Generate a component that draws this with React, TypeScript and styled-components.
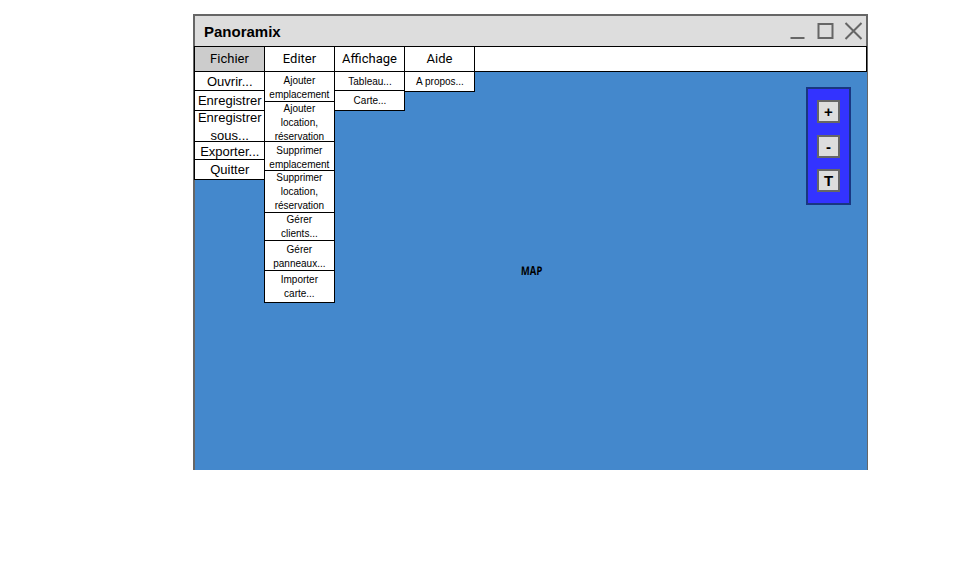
import React from "react";
import styled, { createGlobalStyle } from "styled-components";

const GlobalStyle = createGlobalStyle`
  * { box-sizing: border-box; }
  body { margin: 0; background: #fff; color: #000; font-family: "Liberation Sans", Arial, sans-serif; }
`;

const Window = styled.main`
  width: 675px;
  height: 456px;
  margin: 14px 0 0 193px;
  display: flex;
  flex-direction: column;
`;

const TitleBar = styled.header`
  height: 32px;
  flex: none;
  display: flex;
  align-items: center;
  justify-content: space-between;
  padding-left: 9px;
  background: #ddd;
  border: 2px solid #666;
  border-bottom: 0;
`;

const Title = styled.h1`
  margin: 0;
  padding-top: 2px;
  font-size: 15px;
  line-height: 20px;
`;

const WindowControls = styled.svg`
  display: block;
  width: 80px;
  height: 30px;
  fill: none;
  stroke: #666;
  stroke-width: 2;
`;

const MenuBar = styled.nav`
  height: 26px;
  flex: none;
  display: flex;
  background: #666;
  padding: 0 1px;
`;

const MenuStrip = styled.div`
  flex: 1;
  display: flex;
  background: #fff;
  border: 1px solid #000;
`;

const Menu = styled.div`
  position: relative;
  width: 70px;
  border-right: 1px solid #000;
`;

const MenuTitle = styled.div<{ $active?: boolean }>`
  height: 24px;
  font: 13px/24px Roboto, sans-serif;
  text-align: center;
  background: ${(p) => (p.$active ? "#ccc" : "#fff")};
`;

const Dropdown = styled.div<{ $large?: boolean }>`
  position: absolute;
  z-index: 1;
  top: 24px;
  left: -1px;
  width: 71px;
  border: 1px solid #000;
  border-bottom: 0;
  font-size: ${(p) => (p.$large ? 13 : 10)}px;
  line-height: ${(p) => (p.$large ? 18 : 14)}px;
  text-align: center;
`;

const MenuItem = styled.div<{ $height: number; $shift: number; $nudge: number }>`
  height: ${(p) => p.$height}px;
  display: flex;
  align-items: center;
  justify-content: center;
  overflow: hidden;
  white-space: pre;
  background: #fff;
  border-bottom: 1px solid #000;
  padding-top: ${(p) => p.$shift}px;
  padding-left: ${(p) => Math.max(p.$nudge, 0)}px;
  padding-right: ${(p) => Math.max(-p.$nudge, 0)}px;
`;

const MapArea = styled.section`
  flex: 1;
  display: grid;
  place-items: center;
  position: relative;
  background: #4488cc;
  border-left: 2px solid #666;
  border-right: 1px solid #666;
`;

const MapLabel = styled.span`
  display: flex;
  padding-left: 1px;
  font: 700 12px/14px "Open Sans", sans-serif;
  transform: scaleX(0.78);
`;

const MapLetter = styled.span<{ $tilt: number }>`
  transform: skewX(${(p) => p.$tilt}deg);
`;

const ZoomPanel = styled.aside`
  position: absolute;
  top: 15px;
  right: 16px;
  width: 45px;
  height: 118px;
  padding: 11px 0 11px 9px;
  display: flex;
  flex-direction: column;
  justify-content: space-between;
  background: #3333ff;
  border: 2px solid #193681;
`;

const ZoomButton = styled.button`
  width: 23px;
  height: 23px;
  padding: 0;
  background: #ddd;
  border: 2px solid #666;
  color: #000;
  font: 700 15px/19px "Liberation Sans", Arial, sans-serif;
`;

type Item = [label: string, height: number, shift: number];

const menus: { title: string; large?: boolean; nudge: number; items: Item[] }[] = [
  {
    title: "Fichier",
    large: true,
    nudge: 0.5,
    items: [
      ["Ouvrir...", 19, 2],
      ["Enregistrer", 20, 0],
      ["Enregistrer\nsous...", 31, 1],
      ["Exporter...", 18, 2],
      ["Quitter", 20, 0],
    ],
  },
  {
    title: "Editer",
    nudge: -0.25,
    items: [
      ["Ajouter\nemplacement", 30, 2],
      ["Ajouter\nlocation,\nréservation", 40, 3],
      ["Supprimer\nemplacement", 29, 3],
      ["Supprimer\nlocation,\nréservation", 42, 0],
      ["Gérer\nclients...", 28, 0],
      ["Gérer\npanneaux...", 30, 2],
      ["Importer\ncarte...", 32, 0],
    ],
  },
  { title: "Affichage", nudge: 1, items: [["Tableau...", 19, 1], ["Carte...", 20, 0]] },
  { title: "Aide", nudge: 1, items: [["A propos...", 20, 0]] },
];

export default function App() {
  return (
    <>
      <GlobalStyle />
      <Window>
        <TitleBar>
          <Title>Panoramix</Title>
          <WindowControls viewBox="0 0 80 30" aria-hidden="true">
            <path d="M4.5 22h14M32.5 8h14v14h-14zM59.5 7l16 16M75.5 7l-16 16" />
          </WindowControls>
        </TitleBar>
        <MenuBar>
          <MenuStrip>
            {menus.map((menu, i) => (
              <Menu key={menu.title}>
                <MenuTitle $active={i === 0}>{menu.title}</MenuTitle>
                <Dropdown $large={menu.large}>
                  {menu.items.map(([label, height, shift]) => (
                    <MenuItem key={label} $height={height} $shift={shift} $nudge={menu.nudge}>
                      {label}
                    </MenuItem>
                  ))}
                </Dropdown>
              </Menu>
            ))}
          </MenuStrip>
        </MenuBar>
        <MapArea>
          <MapLabel>
            <MapLetter $tilt={-3}>M</MapLetter>
            <MapLetter $tilt={0}>A</MapLetter>
            <MapLetter $tilt={-3}>P</MapLetter>
          </MapLabel>
          <ZoomPanel>
            <ZoomButton>+</ZoomButton>
            <ZoomButton>-</ZoomButton>
            <ZoomButton>T</ZoomButton>
          </ZoomPanel>
        </MapArea>
      </Window>
    </>
  );
}
